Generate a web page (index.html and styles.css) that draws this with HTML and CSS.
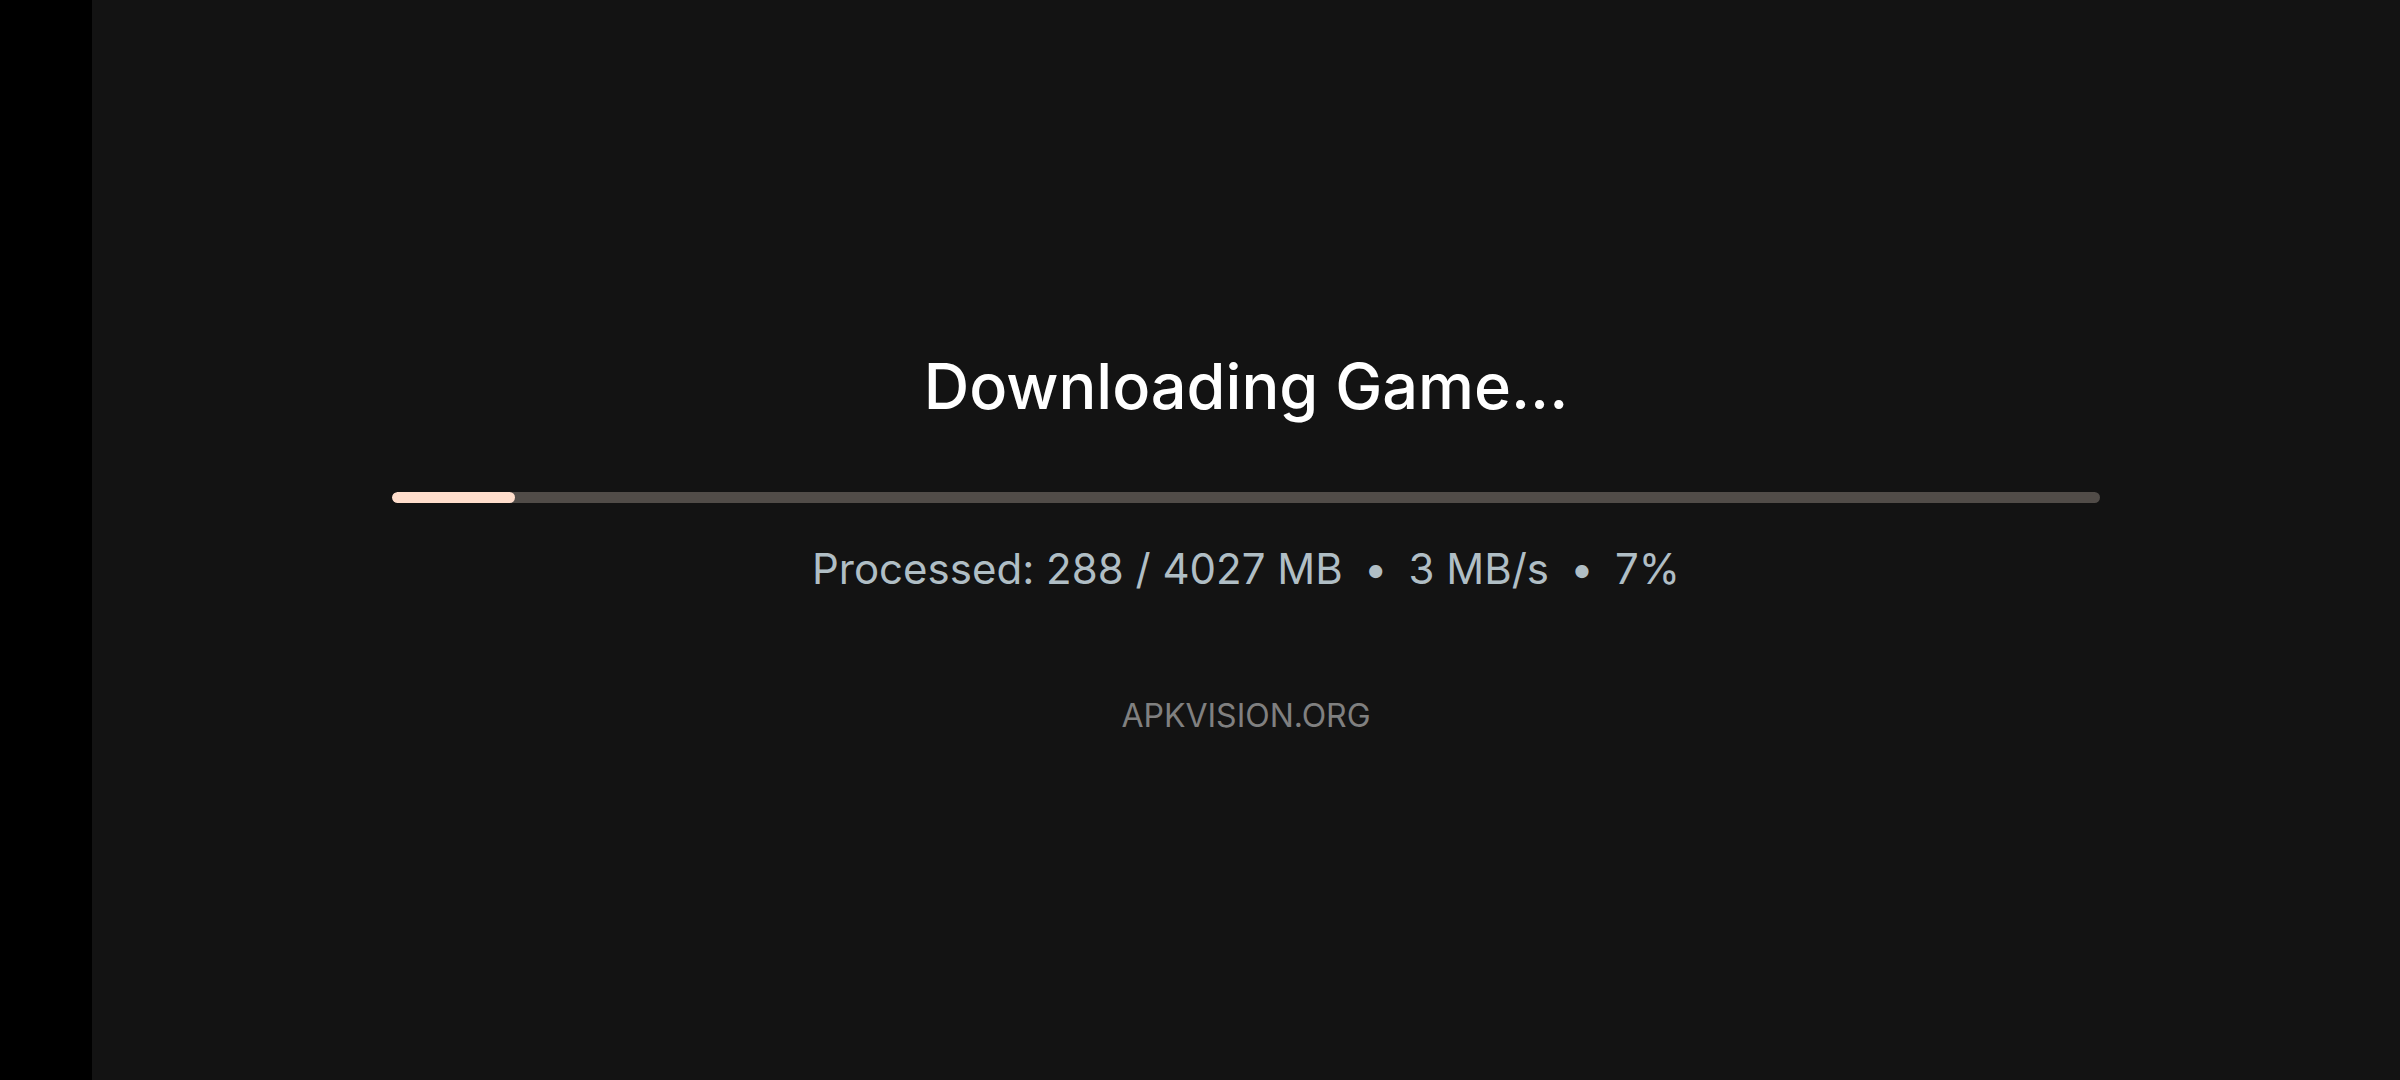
FILE: index.html
```html
<!DOCTYPE html>
<html lang="en">
<head>
    <meta charset="UTF-8">
    <meta name="viewport" content="width=device-width, initial-scale=1.0">
    <title>Downloading Game...</title>
    <link rel="stylesheet" href="styles.css">
</head>
<body>

    <!-- Left edge strip -->
    <div class="edge"></div>

    <!-- Download screen -->
    <main class="screen">
        <h1 class="title">Downloading Game...</h1>

        <div class="track">
            <div class="fill" style="width: 7.2%"></div>
        </div>

        <p class="stats">
            <span>Processed: 288 / 4027 MB</span>
            <span class="dot">•</span>
            <span>3 MB/s</span>
            <span class="dot">•</span>
            <span>7%</span>
        </p>

        <p class="site">APKVISION.ORG</p>
    </main>

</body>
</html>
```

FILE: styles.css
```css
/* General */
body {
    margin: 0;
    height: 100vh;
    display: flex;
    background: #131313;
    font-family: 'Inter', 'Noto Sans', sans-serif;
    overflow: hidden;
}

.edge {
    width: 92px;
    flex-shrink: 0;
    background: #000;
}

/* Main column */
.screen {
    flex: 1;
    display: flex;
    flex-direction: column;
    align-items: center;
    padding-top: 346px;
}

.title {
    margin: 0;
    font-size: 63px;
    font-weight: 500;
    line-height: 80px;
    color: #fff;
}

/* Progress bar */
.track {
    width: 1708px;
    height: 11px;
    margin-top: 66px;
    border-radius: 6px;
    background: #514c48;
    overflow: hidden;
}

.fill {
    height: 100%;
    border-radius: 6px;
    background: #ffdecc;
}

.stats {
    margin: 38px 0 0;
    display: flex;
    gap: 23px;
    font-size: 42px;
    line-height: 56px;
    color: #b0bec5;
}

.dot {
    font-weight: 700;
}

.site {
    margin: 99px 0 0;
    font-size: 32px;
    line-height: 40px;
    color: #808080;
}
```
